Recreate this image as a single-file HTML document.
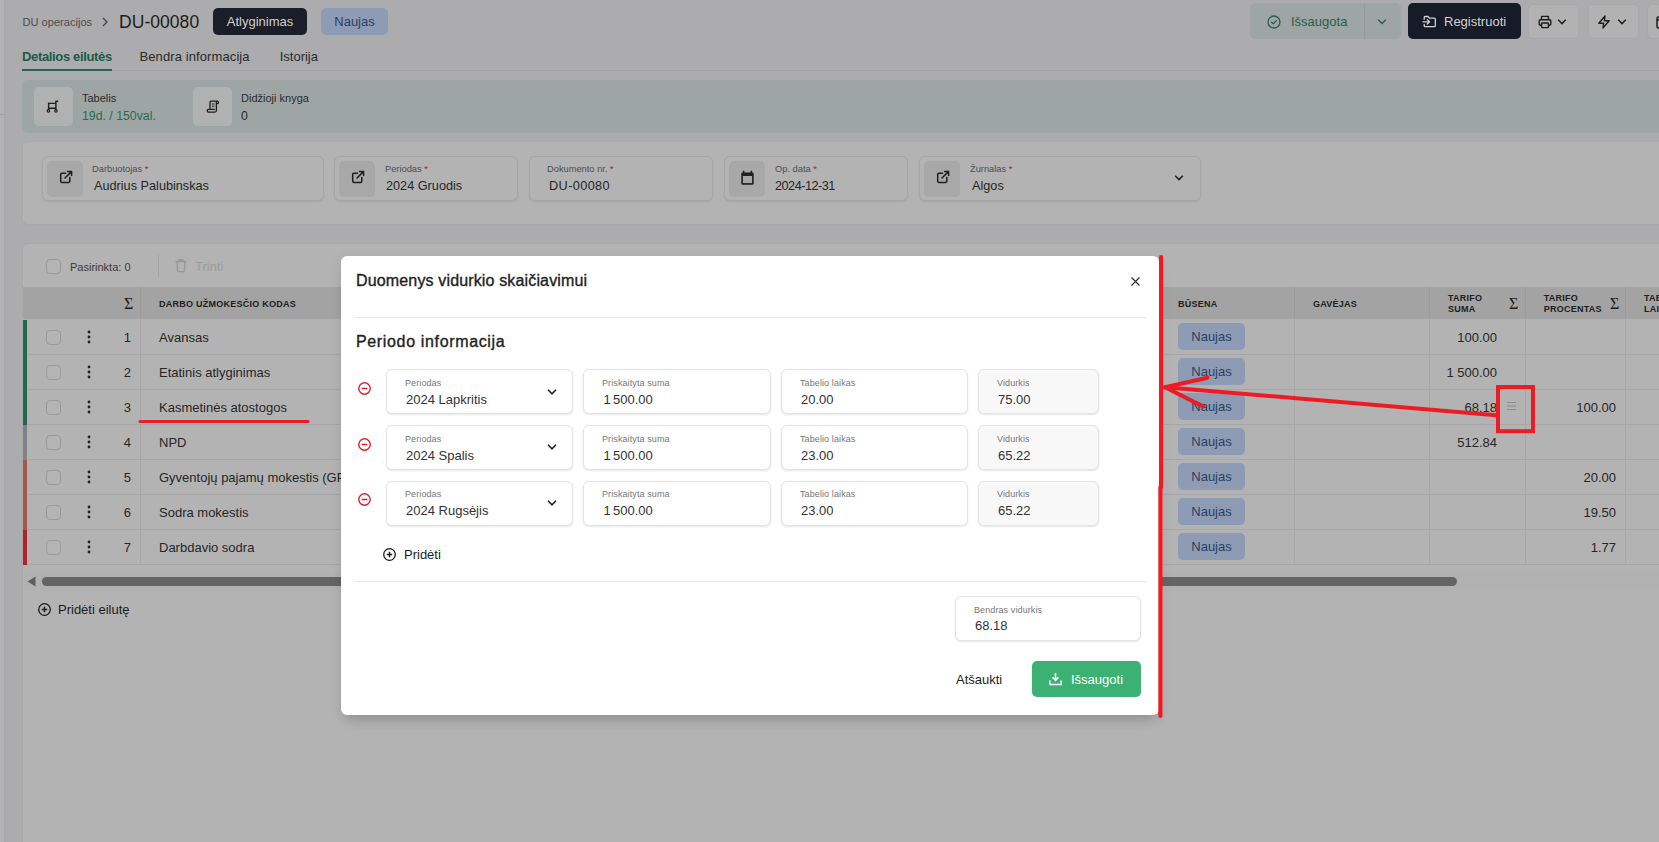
<!DOCTYPE html>
<html lang="lt"><head><meta charset="utf-8"><title>DU-00080</title>
<style>
*{box-sizing:border-box;margin:0;padding:0}
html,body{width:1659px;height:842px;overflow:hidden}
body{background:#acacae;font-family:"Liberation Sans",sans-serif;color:#2a2a2a;position:relative}
.a{position:absolute}
.t{position:absolute;white-space:nowrap;line-height:1}
#sb{left:0;top:0;width:5px;height:842px;background:#b3b3b3;border-right:1px solid #a8a8a8}
#sbl{left:0;top:114px;width:5px;height:1px;background:#a3a3a3}
.badge{border-radius:5px;height:27px;top:8px;font-size:13px;line-height:27px;text-align:center}
.btn{top:3px;height:36px;border-radius:5px}
.sbtn{top:4px;height:35px;border-radius:5px;background:#b2b2b2;border:1px solid #a8a8aa;width:51px}
.card{background:#b3b3b3;border:1px solid #a9a9a9;border-radius:6px}
.fld{background:#b3b3b3;border:1px solid #a6a6a6;border-radius:6px;box-shadow:0 1px 2px rgba(0,0,0,.08);height:45px;top:156px}
.fi{left:4px;top:4px;width:36px;height:36px;border-radius:5px;background:#a8a8a8}
.lb{font-size:9.300px;color:#4e4e4e}
.vl{font-size:12.700px;color:#262626}
.req{color:#a02035}
.row{left:23px;width:1700px;height:35px;border-bottom:1px solid #a7a7a7}
.bar{left:0;top:0;width:4px;height:35px}
.cb{width:15px;height:15px;border:1px solid #9a9a9a;border-radius:4px;background:#b4b4b4}
.cell{font-size:13px;color:#262626}
.nj{left:1155px;top:3px;width:67px;height:27px;border-radius:5px;background:#8d9bb5;color:#2c3f62;font-size:13px;line-height:27px;text-align:center}
.vb{top:0;width:1px;height:35px;background:#a8a8a8}
.hd{font-size:9px;font-weight:700;letter-spacing:.250px;color:#202020}
.sg{font-size:16px;color:#1c1c1c;font-family:"Liberation Serif","DejaVu Serif",serif}
#modal{left:341px;top:256px;width:818px;height:459px;background:#fff;border-radius:6px;box-shadow:0 9px 12px -5px rgba(0,0,0,.17),0 4px 14px 1px rgba(0,0,0,.05)}
.mf{background:#fff;border:1px solid #e4e4e4;border-radius:6px;box-shadow:0 1px 2px rgba(0,0,0,.1);height:45px}
.mf.ro{background:#f8f8f8}
.ml{font-size:9px;color:#777;left:18px;top:9px;letter-spacing:.100px}
.mv{font-size:13px;color:#333;left:19px;top:23px}
.ns{word-spacing:-1.300px;margin-left:.500px}
</style></head><body>
<div class="a" id="sb"></div><div class="a" id="sbl"></div>
<div class="t" style="left:22.500px;top:17px;font-size:11.100px;color:#4c4c4c">DU operacijos</div>
<svg class="a" style="left:100.300px;top:15.700px" width="10" height="12" viewBox="0 0 10 12"><path d="M3 2l4 4-4 4" fill="none" stroke="#444" stroke-width="1.300"/></svg>
<div class="t" style="left:119px;top:14px;font-size:17.500px;color:#1c1c1c;letter-spacing:.050px">DU-00080</div>
<div class="a badge" style="left:213px;width:94px;background:#1b1e29;color:#cfcfcf">Atlyginimas</div>
<div class="a badge" style="left:321px;width:67px;background:#8d9bb5;color:#2c3f62">Naujas</div>
<div class="a btn" style="left:1250px;width:151px;background:#9da6a4"></div>
<div class="a" style="left:1364px;top:3px;width:1px;height:36px;background:#949d9b"></div>
<div class="a btn" style="left:1408px;width:113px;background:#161b27"></div>
<div class="a sbtn" style="left:1528px"></div>
<div class="a sbtn" style="left:1588px"></div>
<div class="a sbtn" style="left:1647px"></div>
<div class="t" style="left:1291px;top:15px;font-size:13px;color:#305c4b">Išsaugota</div>
<div class="t" style="left:1444px;top:15px;font-size:13px;color:#d2d2d2">Registruoti</div>
<div class="a" style="left:22px;top:70px;width:1700px;height:1px;background:#a4a4a6"></div>
<div class="t" style="left:22px;top:50px;font-size:13px;font-weight:700;color:#1d5a44;letter-spacing:-.350px">Detalios eilutės</div>
<div class="a" style="left:22px;top:69px;width:90px;height:2px;background:#1d6a4e"></div>
<div class="t" style="left:139.500px;top:50px;font-size:13px;color:#2a2a2a;letter-spacing:.100px">Bendra informacija</div>
<div class="t" style="left:279.700px;top:50px;font-size:13px;color:#2a2a2a">Istorija</div>
<div class="a" style="left:22px;top:80px;width:1700px;height:53px;background:#9da6a4;border-radius:6px"></div>
<div class="a" style="left:34px;top:87px;width:39px;height:39px;background:#b0b1b1;border-radius:5px"></div>
<div class="a" style="left:193px;top:87px;width:39px;height:39px;background:#b0b1b1;border-radius:5px"></div>
<div class="t" style="left:82px;top:93px;font-size:11px;color:#2a2a2a">Tabelis</div>
<div class="t" style="left:82px;top:110px;font-size:12.300px;color:#2a6a52">19d. / 150val.</div>
<div class="t" style="left:241px;top:93px;font-size:11px;color:#2a2a2a">Didžioji knyga</div>
<div class="t" style="left:241px;top:110px;font-size:12.300px;color:#2a2a2a">0</div>
<div class="a card" style="left:22px;top:141px;width:1700px;height:84px"></div>
<div class="a fld" style="left:42px;width:282px"><div class="a fi"></div></div>
<div class="a fld" style="left:334px;width:184px"><div class="a fi"></div></div>
<div class="a fld" style="left:529px;width:184px"></div>
<div class="a fld" style="left:724px;width:184px"><div class="a fi"></div></div>
<div class="a fld" style="left:919px;width:282px"><div class="a fi"></div></div>
<div class="t lb" style="left:92px;top:165px">Darbuotojas <span class="req">*</span></div>
<div class="t vl" style="left:94px;top:180px">Audrius Palubinskas</div>
<div class="t lb" style="left:385px;top:165px">Periodas <span class="req">*</span></div>
<div class="t vl" style="left:386px;top:180px">2024 Gruodis</div>
<div class="t lb" style="left:547px;top:165px">Dokumento nr. <span class="req">*</span></div>
<div class="t vl" style="left:549px;top:180px;letter-spacing:.400px">DU-00080</div>
<div class="t lb" style="left:775px;top:165px">Op. data <span class="req">*</span></div>
<div class="t vl" style="left:775px;top:180px;letter-spacing:-.500px">2024-12-31</div>
<div class="t lb" style="left:970px;top:165px">Žurnalas <span class="req">*</span></div>
<div class="t vl" style="left:972px;top:180px">Algos</div>
<svg class="a" style="left:58.5px;top:169.500px" width="14" height="14" viewBox="0 0 14 14"><path d="M10.800 7.600v3.600a1.200 1.200 0 0 1-1.200 1.200H2.900a1.200 1.200 0 0 1-1.200-1.200V4.500a1.200 1.200 0 0 1 1.200-1.200h3.600M8.600 1.400h4v4M6 8l6.400-6.400" fill="none" stroke="#1e1e1e" stroke-width="1.500" stroke-linecap="round" stroke-linejoin="round"/></svg>
<svg class="a" style="left:350.5px;top:169.500px" width="14" height="14" viewBox="0 0 14 14"><path d="M10.800 7.600v3.600a1.200 1.200 0 0 1-1.200 1.200H2.900a1.200 1.200 0 0 1-1.200-1.200V4.500a1.200 1.200 0 0 1 1.200-1.200h3.600M8.600 1.400h4v4M6 8l6.400-6.400" fill="none" stroke="#1e1e1e" stroke-width="1.500" stroke-linecap="round" stroke-linejoin="round"/></svg>
<svg class="a" style="left:935.5px;top:169.500px" width="14" height="14" viewBox="0 0 14 14"><path d="M10.800 7.600v3.600a1.200 1.200 0 0 1-1.200 1.200H2.900a1.200 1.200 0 0 1-1.200-1.200V4.500a1.200 1.200 0 0 1 1.200-1.200h3.600M8.600 1.400h4v4M6 8l6.400-6.400" fill="none" stroke="#1e1e1e" stroke-width="1.500" stroke-linecap="round" stroke-linejoin="round"/></svg>
<svg class="a" style="left:739.700px;top:170px" width="15" height="16" viewBox="0 0 14 15"><path d="M3.400 0.800v2M10.600 0.800v2" stroke="#1e1e1e" stroke-width="1.500"/><rect x="1.200" y="2.400" width="11.600" height="11.400" rx="1.200" fill="#1e1e1e"/><rect x="2.700" y="5.600" width="8.600" height="6.700" fill="#a8a8a8"/></svg>
<svg class="a" style="left:1173px;top:174px" width="12" height="8" viewBox="0 0 12 8"><path d="M2.200 1.800l3.800 3.800 3.800-3.800" fill="none" stroke="#1e1e1e" stroke-width="1.5"/></svg>
<svg class="a" style="left:46px;top:100px" width="14" height="14" viewBox="0 0 14 14"><path d="M2.600 3.200v6.200M2.600 3.400h7.300M2.600 8.200h7.300M9.900 1.300v8.100M9.900 1.300h1.800" fill="none" stroke="#1e1e1e" stroke-width="1.400" stroke-linecap="round"/><circle cx="2.400" cy="10.900" r="1.200" fill="none" stroke="#1e1e1e" stroke-width="1.200"/><circle cx="9.900" cy="10.900" r="1.200" fill="none" stroke="#1e1e1e" stroke-width="1.200"/></svg>
<svg class="a" style="left:205.500px;top:100px" width="14" height="14" viewBox="0 0 14 14"><path d="M4 9.200V2.300c0-.6.500-1.100 1.100-1.100h6.200M11.300 1.200c.8 0 1.200.6 1.200 1.200s-.4 1.200-1.200 1.200h-1M10.400 2v8.600c0 .9-.6 1.500-1.400 1.500H2.600c-.8 0-1.400-.5-1.400-1.300 0-.7.500-1.400 1.400-1.400h5.800" fill="none" stroke="#1e1e1e" stroke-width="1.300" stroke-linecap="round" stroke-linejoin="round"/><path d="M5.800 4h2.800M5.800 6.300h2.800" stroke="#1e1e1e" stroke-width="1.100"/></svg>
<svg class="a" style="left:1266px;top:13.500px" width="16" height="16" viewBox="0 0 16 16"><circle cx="8" cy="8" r="6" fill="none" stroke="#305c4b" stroke-width="1.300"/><path d="M5.600 8.200l1.700 1.700 3.100-3.300" fill="none" stroke="#305c4b" stroke-width="1.300" stroke-linecap="round" stroke-linejoin="round"/></svg>
<svg class="a" style="left:1376px;top:18px" width="12" height="8" viewBox="0 0 12 8"><path d="M2.200 1.800l3.800 3.800 3.800-3.800" fill="none" stroke="#305c4b" stroke-width="1.4"/></svg>
<svg class="a" style="left:1422px;top:15px" width="15" height="13" viewBox="0 0 15 13"><path d="M2.200 4.200V2.400c0-.5.400-.9.900-.9h3l1.300 1.600h5c.5 0 .9.400.9.900v6.700c0 .5-.4.900-.9.900H3.100c-.5 0-.9-.4-.9-.9V9.400" fill="none" stroke="#d2d2d2" stroke-width="1.300" stroke-linejoin="round" stroke-linecap="round"/><path d="M1 6.800h6.400M5.300 4.600l2.200 2.200-2.200 2.200" fill="none" stroke="#d2d2d2" stroke-width="1.300" stroke-linecap="round" stroke-linejoin="round"/></svg>
<svg class="a" style="left:1538px;top:15px" width="14" height="14" viewBox="0 0 14 14"><path d="M3.600 4.600V1.400h6.800v3.200M3.600 10.200H2.300c-.6 0-1.100-.5-1.100-1.100V5.900c0-.6.500-1.100 1.100-1.100h9.400c.6 0 1.100.5 1.100 1.100v3.200c0 .6-.5 1.100-1.100 1.100h-1.300" fill="none" stroke="#1e1e1e" stroke-width="1.400" stroke-linejoin="round"/><rect x="3.600" y="8" width="6.800" height="4.600" rx=".6" fill="none" stroke="#1e1e1e" stroke-width="1.400"/></svg>
<svg class="a" style="left:1556px;top:18px" width="12" height="8" viewBox="0 0 12 8"><path d="M2.200 1.800l3.800 3.800 3.800-3.800" fill="none" stroke="#1e1e1e" stroke-width="1.5"/></svg>
<svg class="a" style="left:1597px;top:14.500px" width="14" height="14" viewBox="0 0 14 14"><path d="M8 1L1.800 8.200h4.800L6 13l6.200-7.200H7.400L8 1z" fill="none" stroke="#1e1e1e" stroke-width="1.400" stroke-linejoin="round"/></svg>
<svg class="a" style="left:1616px;top:18px" width="12" height="8" viewBox="0 0 12 8"><path d="M2.200 1.800l3.800 3.800 3.800-3.800" fill="none" stroke="#1e1e1e" stroke-width="1.5"/></svg>
<svg class="a" style="left:1656px;top:15px" width="14" height="14" viewBox="0 0 14 14"><rect x="1" y="2" width="12" height="11" rx="1.500" fill="none" stroke="#1e1e1e" stroke-width="1.500"/><path d="M1 5h12" stroke="#1e1e1e" stroke-width="1.500"/></svg>
<div class="a card" style="left:22px;top:243px;width:1700px;height:620px"></div>
<div class="a cb" style="left:46px;top:259px"></div>
<div class="t" style="left:70px;top:262px;font-size:11px;color:#3a3a3a">Pasirinkta: 0</div>
<div class="a" style="left:158px;top:255px;width:1px;height:22px;background:#a3a3a3"></div>
<svg class="a" style="left:174px;top:258px" width="14" height="15" viewBox="0 0 14 15"><path d="M1.500 3.500h11M5 3.500V1.800h4v1.700M3 3.500l.6 9.300c0 .5.400.8.900.8h5c.5 0 .9-.3.900-.8l.6-9.300" fill="none" stroke="#979797" stroke-width="1.300"/></svg>
<div class="t" style="left:195px;top:260px;font-size:13px;color:#9c9c9c">Trinti</div>
<div class="a" style="left:23px;top:287px;width:1700px;height:32px;background:#a3a3a3"></div>
<div class="t sg" style="left:124px;top:296px">Σ</div>
<div class="t hd" style="left:159px;top:300px">DARBO UŽMOKESČIO KODAS</div>
<div class="t hd" style="left:1178px;top:300px">BŪSENA</div>
<div class="t hd" style="left:1313px;top:300px">GAVĖJAS</div>
<div class="t hd" style="left:1448px;top:293.300px;line-height:10.500px">TARIFO<br>SUMA</div>
<div class="t sg" style="left:1509px;top:295.500px">Σ</div>
<div class="t hd" style="left:1543.700px;top:293.300px;line-height:10.500px">TARIFO<br>PROCENTAS</div>
<div class="t sg" style="left:1610px;top:295.500px">Σ</div>
<div class="t hd" style="left:1644px;top:293.300px;line-height:10.500px">TABELIO<br>LAIKAS</div>
<div class="a" style="left:140px;top:287px;width:1px;height:32px;background:#9b9b9b"></div>
<div class="a" style="left:1294px;top:287px;width:1px;height:32px;background:#9b9b9b"></div>
<div class="a" style="left:1429px;top:287px;width:1px;height:32px;background:#9b9b9b"></div>
<div class="a" style="left:1525px;top:287px;width:1px;height:32px;background:#9b9b9b"></div>
<div class="a" style="left:1625px;top:287px;width:1px;height:32px;background:#9b9b9b"></div>
<div class="a row" style="top:320px">
<div class="a bar" style="background:#1f6a4f"></div>
<div class="a cb" style="left:23px;top:10px"></div>
<svg class="a" style="left:63.500px;top:10px" width="4" height="14" viewBox="0 0 4 14"><circle cx="2" cy="2" r="1.400" fill="#222"/><circle cx="2" cy="7" r="1.400" fill="#222"/><circle cx="2" cy="12" r="1.400" fill="#222"/></svg>
<div class="t cell" style="left:88px;top:11px;width:20px;text-align:right">1</div>
<div class="t cell" style="left:136px;top:11px">Avansas</div>
<div class="a nj">Naujas</div>
<div class="t cell" style="left:1374px;top:11px;width:100px;text-align:right">100.00</div>
<div class="a vb" style="left:117px"></div>
<div class="a vb" style="left:1271px"></div>
<div class="a vb" style="left:1406px"></div>
<div class="a vb" style="left:1502px"></div>
<div class="a vb" style="left:1602px"></div>
</div>
<div class="a row" style="top:355px">
<div class="a bar" style="background:#1f6a4f"></div>
<div class="a cb" style="left:23px;top:10px"></div>
<svg class="a" style="left:63.500px;top:10px" width="4" height="14" viewBox="0 0 4 14"><circle cx="2" cy="2" r="1.400" fill="#222"/><circle cx="2" cy="7" r="1.400" fill="#222"/><circle cx="2" cy="12" r="1.400" fill="#222"/></svg>
<div class="t cell" style="left:88px;top:11px;width:20px;text-align:right">2</div>
<div class="t cell" style="left:136px;top:11px">Etatinis atlyginimas</div>
<div class="a nj">Naujas</div>
<div class="t cell" style="left:1374px;top:11px;width:100px;text-align:right">1 500.00</div>
<div class="a vb" style="left:117px"></div>
<div class="a vb" style="left:1271px"></div>
<div class="a vb" style="left:1406px"></div>
<div class="a vb" style="left:1502px"></div>
<div class="a vb" style="left:1602px"></div>
</div>
<div class="a row" style="top:390px">
<div class="a bar" style="background:#1f6a4f"></div>
<div class="a cb" style="left:23px;top:10px"></div>
<svg class="a" style="left:63.500px;top:10px" width="4" height="14" viewBox="0 0 4 14"><circle cx="2" cy="2" r="1.400" fill="#222"/><circle cx="2" cy="7" r="1.400" fill="#222"/><circle cx="2" cy="12" r="1.400" fill="#222"/></svg>
<div class="t cell" style="left:88px;top:11px;width:20px;text-align:right">3</div>
<div class="t cell" style="left:136px;top:11px">Kasmetinės atostogos</div>
<div class="a nj">Naujas</div>
<div class="t cell" style="left:1374px;top:11px;width:100px;text-align:right">68.18</div>
<div class="t cell" style="left:1493px;top:11px;width:100px;text-align:right">100.00</div>
<div class="a vb" style="left:117px"></div>
<div class="a vb" style="left:1271px"></div>
<div class="a vb" style="left:1406px"></div>
<div class="a vb" style="left:1502px"></div>
<div class="a vb" style="left:1602px"></div>
</div>
<div class="a row" style="top:425px">
<div class="a bar" style="background:#7e808c"></div>
<div class="a cb" style="left:23px;top:10px"></div>
<svg class="a" style="left:63.500px;top:10px" width="4" height="14" viewBox="0 0 4 14"><circle cx="2" cy="2" r="1.400" fill="#222"/><circle cx="2" cy="7" r="1.400" fill="#222"/><circle cx="2" cy="12" r="1.400" fill="#222"/></svg>
<div class="t cell" style="left:88px;top:11px;width:20px;text-align:right">4</div>
<div class="t cell" style="left:136px;top:11px">NPD</div>
<div class="a nj">Naujas</div>
<div class="t cell" style="left:1374px;top:11px;width:100px;text-align:right">512.84</div>
<div class="a vb" style="left:117px"></div>
<div class="a vb" style="left:1271px"></div>
<div class="a vb" style="left:1406px"></div>
<div class="a vb" style="left:1502px"></div>
<div class="a vb" style="left:1602px"></div>
</div>
<div class="a row" style="top:460px">
<div class="a bar" style="background:#a5564b"></div>
<div class="a cb" style="left:23px;top:10px"></div>
<svg class="a" style="left:63.500px;top:10px" width="4" height="14" viewBox="0 0 4 14"><circle cx="2" cy="2" r="1.400" fill="#222"/><circle cx="2" cy="7" r="1.400" fill="#222"/><circle cx="2" cy="12" r="1.400" fill="#222"/></svg>
<div class="t cell" style="left:88px;top:11px;width:20px;text-align:right">5</div>
<div class="t cell" style="left:136px;top:11px">Gyventojų pajamų mokestis (GPM)</div>
<div class="a nj">Naujas</div>
<div class="t cell" style="left:1493px;top:11px;width:100px;text-align:right">20.00</div>
<div class="a vb" style="left:117px"></div>
<div class="a vb" style="left:1271px"></div>
<div class="a vb" style="left:1406px"></div>
<div class="a vb" style="left:1502px"></div>
<div class="a vb" style="left:1602px"></div>
</div>
<div class="a row" style="top:495px">
<div class="a bar" style="background:#a5564b"></div>
<div class="a cb" style="left:23px;top:10px"></div>
<svg class="a" style="left:63.500px;top:10px" width="4" height="14" viewBox="0 0 4 14"><circle cx="2" cy="2" r="1.400" fill="#222"/><circle cx="2" cy="7" r="1.400" fill="#222"/><circle cx="2" cy="12" r="1.400" fill="#222"/></svg>
<div class="t cell" style="left:88px;top:11px;width:20px;text-align:right">6</div>
<div class="t cell" style="left:136px;top:11px">Sodra mokestis</div>
<div class="a nj">Naujas</div>
<div class="t cell" style="left:1493px;top:11px;width:100px;text-align:right">19.50</div>
<div class="a vb" style="left:117px"></div>
<div class="a vb" style="left:1271px"></div>
<div class="a vb" style="left:1406px"></div>
<div class="a vb" style="left:1502px"></div>
<div class="a vb" style="left:1602px"></div>
</div>
<div class="a row" style="top:530px">
<div class="a bar" style="background:#b2202c"></div>
<div class="a cb" style="left:23px;top:10px"></div>
<svg class="a" style="left:63.500px;top:10px" width="4" height="14" viewBox="0 0 4 14"><circle cx="2" cy="2" r="1.400" fill="#222"/><circle cx="2" cy="7" r="1.400" fill="#222"/><circle cx="2" cy="12" r="1.400" fill="#222"/></svg>
<div class="t cell" style="left:88px;top:11px;width:20px;text-align:right">7</div>
<div class="t cell" style="left:136px;top:11px">Darbdavio sodra</div>
<div class="a nj">Naujas</div>
<div class="t cell" style="left:1493px;top:11px;width:100px;text-align:right">1.77</div>
<div class="a vb" style="left:117px"></div>
<div class="a vb" style="left:1271px"></div>
<div class="a vb" style="left:1406px"></div>
<div class="a vb" style="left:1502px"></div>
<div class="a vb" style="left:1602px"></div>
</div>
<svg class="a" style="left:1505.500px;top:400.500px" width="11" height="10" viewBox="0 0 11 10"><path d="M1 1.500h9M1 5h9M1 8.500h9" stroke="#8a8a8a" stroke-width="1"/></svg>
<div class="a" style="left:24px;top:572px;width:1700px;height:19px;background:#b1b1b1"></div>
<div class="a" style="left:42px;top:577px;width:1415px;height:9px;border-radius:5px;background:#646464"></div>
<svg class="a" style="left:27px;top:576px" width="9" height="11" viewBox="0 0 9 11"><path d="M8.500 0.500v10L0.500 5.500z" fill="#5e5e5e"/></svg>
<svg class="a" style="left:37px;top:602px" width="15" height="15" viewBox="0 0 15 15"><circle cx="7.500" cy="7.500" r="5.800" fill="none" stroke="#1c1c1c" stroke-width="1.300"/><path d="M4.800 7.500h5.400M7.500 4.800v5.400" stroke="#1c1c1c" stroke-width="1.500"/></svg>
<div class="t" style="left:58px;top:603px;font-size:13px;color:#1c1c1c">Pridėti eilutę</div>
<div class="a" id="modal">
<div class="t" style="left:15px;top:17px;font-size:16px;color:#222;letter-spacing:.150px;-webkit-text-stroke:.350px #222">Duomenys vidurkio skaičiavimui</div>
<svg class="a" style="left:789px;top:20px" width="11" height="11" viewBox="0 0 11 11"><path d="M1.500 1.500l8 8M9.500 1.500l-8 8" stroke="#333" stroke-width="1.200"/></svg>
<div class="a" style="left:15px;top:61px;width:790px;height:1px;background:#e6e6e6"></div>
<div class="t" style="left:15px;top:77.5px;font-size:16px;color:#222;letter-spacing:.650px;-webkit-text-stroke:.350px #222">Periodo informacija</div>
<svg class="a" style="left:16px;top:125px" width="15" height="15" viewBox="0 0 15 15"><circle cx="7.500" cy="7.500" r="5.700" fill="none" stroke="#e0202f" stroke-width="1.400"/><path d="M4.600 7.500h5.800" stroke="#e0202f" stroke-width="1.500"/></svg>
<div class="a mf" style="left:45px;top:113px;width:187px"><div class="t ml" style="top:9px">Periodas</div><div class="t mv" style="top:23px">2024 Lapkritis</div></div>
<div class="a mf" style="left:242px;top:113px;width:188px"><div class="t ml" style="top:9px">Priskaityta suma</div><div class="t mv" style="top:23px"><span class="ns">1 500.00</span></div></div>
<div class="a mf" style="left:440px;top:113px;width:187px"><div class="t ml" style="top:9px">Tabelio laikas</div><div class="t mv" style="top:23px">20.00</div></div>
<div class="a mf ro" style="left:637px;top:113px;width:121px"><div class="t ml" style="top:9px">Vidurkis</div><div class="t mv" style="top:23px">75.00</div></div>
<svg class="a" style="left:204.5px;top:132px" width="12" height="8" viewBox="0 0 12 8"><path d="M2 1.800l4 4 4-4" fill="none" stroke="#222" stroke-width="1.600"/></svg>
<svg class="a" style="left:16px;top:181px" width="15" height="15" viewBox="0 0 15 15"><circle cx="7.500" cy="7.500" r="5.700" fill="none" stroke="#e0202f" stroke-width="1.400"/><path d="M4.600 7.500h5.800" stroke="#e0202f" stroke-width="1.500"/></svg>
<div class="a mf" style="left:45px;top:169px;width:187px"><div class="t ml" style="top:9px">Periodas</div><div class="t mv" style="top:23px">2024 Spalis</div></div>
<div class="a mf" style="left:242px;top:169px;width:188px"><div class="t ml" style="top:9px">Priskaityta suma</div><div class="t mv" style="top:23px"><span class="ns">1 500.00</span></div></div>
<div class="a mf" style="left:440px;top:169px;width:187px"><div class="t ml" style="top:9px">Tabelio laikas</div><div class="t mv" style="top:23px">23.00</div></div>
<div class="a mf ro" style="left:637px;top:169px;width:121px"><div class="t ml" style="top:9px">Vidurkis</div><div class="t mv" style="top:23px">65.22</div></div>
<svg class="a" style="left:204.5px;top:187px" width="12" height="8" viewBox="0 0 12 8"><path d="M2 1.800l4 4 4-4" fill="none" stroke="#222" stroke-width="1.600"/></svg>
<svg class="a" style="left:16px;top:236px" width="15" height="15" viewBox="0 0 15 15"><circle cx="7.500" cy="7.500" r="5.700" fill="none" stroke="#e0202f" stroke-width="1.400"/><path d="M4.600 7.500h5.800" stroke="#e0202f" stroke-width="1.500"/></svg>
<div class="a mf" style="left:45px;top:225px;width:187px"><div class="t ml" style="top:8px">Periodas</div><div class="t mv" style="top:22px">2024 Rugsėjis</div></div>
<div class="a mf" style="left:242px;top:225px;width:188px"><div class="t ml" style="top:8px">Priskaityta suma</div><div class="t mv" style="top:22px"><span class="ns">1 500.00</span></div></div>
<div class="a mf" style="left:440px;top:225px;width:187px"><div class="t ml" style="top:8px">Tabelio laikas</div><div class="t mv" style="top:22px">23.00</div></div>
<div class="a mf ro" style="left:637px;top:225px;width:121px"><div class="t ml" style="top:8px">Vidurkis</div><div class="t mv" style="top:22px">65.22</div></div>
<svg class="a" style="left:204.5px;top:243px" width="12" height="8" viewBox="0 0 12 8"><path d="M2 1.800l4 4 4-4" fill="none" stroke="#222" stroke-width="1.600"/></svg>
<svg class="a" style="left:41px;top:291px" width="15" height="15" viewBox="0 0 15 15"><circle cx="7.500" cy="7.500" r="5.800" fill="none" stroke="#1c1c1c" stroke-width="1.300"/><path d="M4.800 7.500h5.400M7.500 4.800v5.400" stroke="#1c1c1c" stroke-width="1.500"/></svg>
<div class="t" style="left:63px;top:292px;font-size:13px;color:#222">Pridėti</div>
<div class="a" style="left:15px;top:325px;width:790px;height:1px;background:#e6e6e6"></div>
<div class="a mf" style="left:614px;top:340px;width:186px"><div class="t ml">Bendras vidurkis</div><div class="t mv" style="top:22px">68.18</div></div>
<div class="t" style="left:615px;top:417px;font-size:13px;color:#1c1c1c">Atšaukti</div>
<div class="a" style="left:691px;top:405px;width:109px;height:36px;border-radius:5px;background:#3bb273"></div>
<svg class="a" style="left:707px;top:416px" width="15" height="15" viewBox="0 0 15 15"><path d="M7.500 1v7M4.600 5.400l2.900 2.900 2.900-2.900" fill="none" stroke="#fff" stroke-width="1.600"/><path d="M1.800 8.500v4h11.400v-4" fill="none" stroke="#fff" stroke-width="1.600"/></svg>
<div class="t" style="left:730px;top:417px;font-size:13px;color:#fff">Išsaugoti</div>
</div>
<svg class="a" style="left:0;top:0" width="1659" height="842" viewBox="0 0 1659 842">
<path d="M1161.100 257V487" stroke="#ed1c24" stroke-width="4.200" stroke-linecap="round" fill="none"/>
<path d="M1160.400 487V716" stroke="#ed1c24" stroke-width="4.200" stroke-linecap="round" fill="none"/>
<path d="M1496 415.300L1165 387.200" stroke="#ed1c24" stroke-width="4" stroke-linecap="round" fill="none"/>
<path d="M1207.500 377.800L1165 387.200L1203 406.400" stroke="#ed1c24" stroke-width="4" stroke-linecap="round" stroke-linejoin="round" fill="none"/>
<rect x="1498" y="387" width="35" height="44.200" stroke="#ed1c24" stroke-width="4" fill="none"/>
<path d="M140 421.500H308" stroke="#ed1c24" stroke-width="3.200" stroke-linecap="round" fill="none"/>
</svg>
</body></html>
